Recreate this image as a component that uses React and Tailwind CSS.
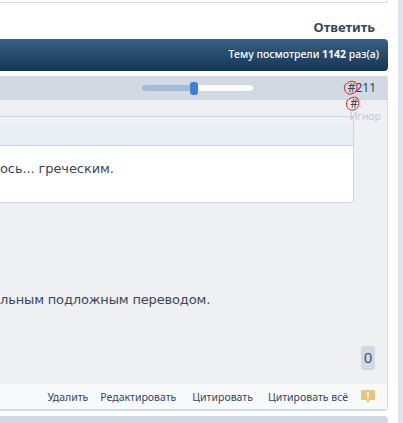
const ACTIONS = [
  { label: "Удалить", gap: "mr-[12px]" },
  { label: "Редактировать", gap: "mr-[16px]" },
  { label: "Цитировать", gap: "mr-[15px]" },
  { label: "Цитировать всё", gap: "mr-[13px]" },
];

function Slider() {
  return (
    <div className="flex h-[6px] w-[111px] items-center rounded-full bg-white">
      <div className="h-[6px] w-[48px] rounded-l-full bg-[#a3bcd9]" />
      <div className="h-[13px] w-[8px] rounded-[3px] bg-[#3b81dc]" />
    </div>
  );
}

function RedMark({ children }) {
  return (
    <span className="relative inline-block">
      {children}
      <svg className="absolute left-[-5px] top-1/2 -translate-y-1/2" width="16" height="16" viewBox="0 0 16 16" fill="none">
        <path d="M2 5C5 1 11 0 13 3C15 7 14 13 8 14C3 15 0 9 2 5Z" stroke="#f01818" strokeWidth="1" />
      </svg>
    </span>
  );
}

export default function App() {
  return (
    <div className="h-[423px] w-[403px] overflow-hidden bg-white font-['Noto_Sans',sans-serif] text-[12px]">
      <div className="flex h-full">
        <div className="w-[388px] shrink-0">
          <div className="h-[3px] rounded-br-[3px] border-b border-r border-[#d3deea]" />
          <div className="flex h-[36px] items-end justify-end pb-[2px] pr-[13px] text-[13px] font-bold text-[#34475f]">
            Ответить
          </div>
          <div className="flex h-[32px] items-center justify-end rounded-r-[4px] bg-gradient-to-b from-[#3a6085] to-[#143656] pr-[9px] text-[10.5px] font-medium text-white">
            <span>Тему посмотрели <b>1142</b> раз(а)</span>
          </div>

          <div className="mt-[5px] rounded-r-[4px] border-b-[2px] border-r border-[#d0dcea] bg-[#eef0f4]">
            <div className="flex h-[24px] items-center bg-[#d3d9e2] pl-[142px] pr-[11px]">
              <Slider />
              <span className="ml-auto text-[#34475f]"><RedMark>#</RedMark>211</span>
            </div>
            <div className="flex h-[284px] flex-col">
              <div className="flex h-[16px] items-start justify-end pr-[29px] leading-[7px] text-[#34475f]"><RedMark>#</RedMark></div>
              <div className="mr-[33px] h-[87px] rounded-br-[4px] border-b border-r border-t border-[#c8d8ea] bg-white">
                <div className="h-[29px] border-b border-[#c8d8ea] bg-gradient-to-b from-[#eef1f6] to-[#e8edf5]" />
                <p className="whitespace-nowrap pt-[13px] font-['DejaVu_Sans',sans-serif] text-[13px] tracking-[-0.1px] text-[#3c4654]">ось... греческим.</p>
              </div>
              <p className="mt-[87px] whitespace-nowrap font-['DejaVu_Sans',sans-serif] text-[13px] tracking-[-0.15px] text-[#3c4654]">льным подложным переводом.</p>
              <div className="mr-[12px] mt-[36px] flex justify-end">
                <span className="flex h-[24px] w-[14px] items-center justify-center rounded-[3px] bg-[#d3d9e2] text-[15px] text-[#34577f]">0</span>
              </div>
            </div>
            <div className="flex h-[25px] items-center justify-end bg-[#f8f9fb] pr-[12px] pt-[2px] text-[10.5px] text-[#34475f]">
              {ACTIONS.map(({ label, gap }) => (
                <span key={label} className={`whitespace-nowrap ${gap}`}>{label}</span>
              ))}
              <svg className="mb-[2px]" width="14" height="14" viewBox="0 0 14 14">
                <path d="M0 0H14V10H9L7 13L5 10H0Z" fill="#e3c77e" />
                <rect x="6" y="2" width="2" height="5" fill="#f7ecd0" />
                <rect x="6" y="8" width="2" height="1" fill="#f7ecd0" />
              </svg>
            </div>
          </div>
          <div className="mt-[5px] h-[10px] rounded-tr-[4px] bg-[#d3d9e2]" />
        </div>
        <div className="ml-[10px] flex-1 bg-[#dfe3eb]" />
      </div>
      <span className="absolute right-[22px] top-[111px] text-[10.5px] leading-none text-[#c4c8d6]">Игнор</span>
    </div>
  );
}
